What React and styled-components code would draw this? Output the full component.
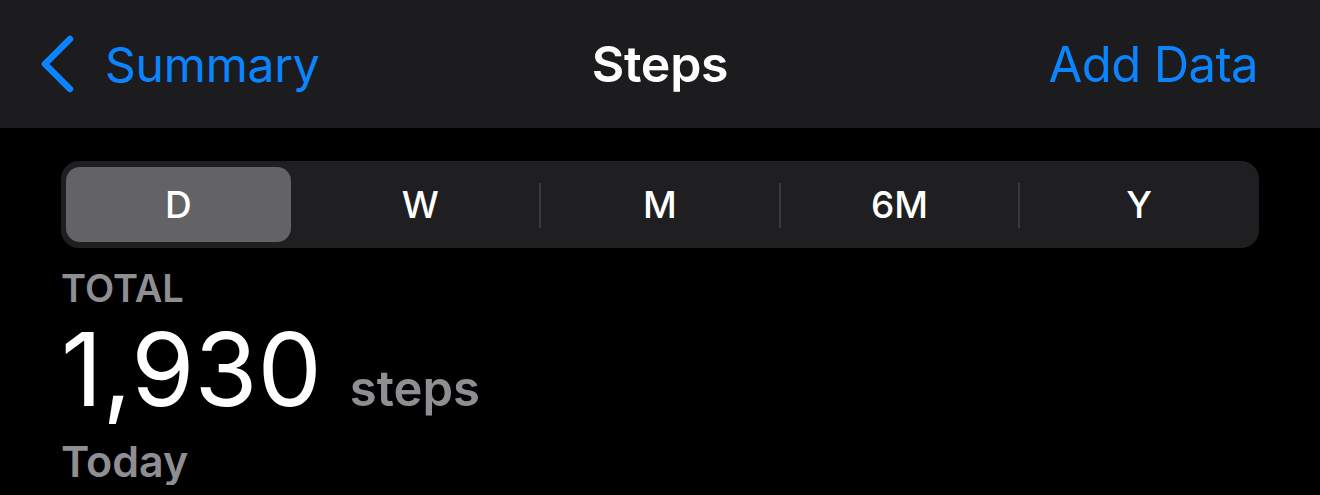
import styled, { createGlobalStyle } from "styled-components";

const GlobalStyle = createGlobalStyle`
  html, body {
    margin: 0;
    background: #000;
    font-family: Inter, "Noto Sans", sans-serif;
    -webkit-font-smoothing: antialiased;
  }
`;

const NavBar = styled.header`
  height: 128px;
  background: #1c1c1e;
  display: grid;
  grid-template-columns: 1fr auto 1fr;
  align-items: center;
  padding: 0 62px;
`;

const BackLink = styled.a`
  display: flex;
  align-items: center;
  gap: 29px;
  margin-left: -22px;
  color: #0a84ff;
  font-size: 48px;
  font-weight: 400;
  letter-spacing: -0.2px;
  justify-self: start;
`;

const Title = styled.h1`
  margin: 0;
  color: #fff;
  font-size: 50px;
  font-weight: 600;
  letter-spacing: -0.3px;
`;

const Action = styled.a`
  justify-self: end;
  color: #0a84ff;
  font-size: 49px;
  font-weight: 400;
  letter-spacing: -0.6px;
`;

const Content = styled.main`
  padding: 33px 61px 0 61px;
`;

const Segmented = styled.div`
  height: 87px;
  background: #1f1f22;
  border-radius: 18px;
  display: grid;
  grid-template-columns: repeat(5, 1fr);
`;

const Segment = styled.div`
  position: relative;
  display: flex;
  align-items: center;
  justify-content: center;
  padding-right: ${(p) => (p.$active ? "5px" : "0")};
  color: #fff;
  font-size: 37px;
  font-weight: 500;

  &::before {
    content: "";
    display: ${(p) => (p.$divider ? "block" : "none")};
    position: absolute;
    left: -1px;
    top: 22px;
    bottom: 20px;
    width: 2px;
    background: #3a3a3c;
  }
`;

const Pill = styled.div`
  position: absolute;
  inset: 6px 10px 6px 5px;
  border-radius: 14px;
  background: #636366;
`;

const SegmentText = styled.span`
  position: relative;
`;

const Label = styled.div`
  margin-top: 19px;
  color: #8e8e93;
  font-size: 38px;
  font-weight: 600;
  line-height: 42px;
`;

const ValueRow = styled.div`
  display: flex;
  align-items: baseline;
  gap: 28px;
  padding-top: 12px;
  line-height: 97px;
`;

const Value = styled.span`
  color: #fff;
  font-size: 102px;
  font-weight: 400;
`;

const Unit = styled.span`
  color: #8e8e93;
  font-size: 49px;
  font-weight: 600;
`;

const Period = styled.div`
  color: #8e8e93;
  font-size: 43px;
  font-weight: 600;
  line-height: 48px;
`;

const segments = ["D", "W", "M", "6M", "Y"];

function Chevron() {
  return (
    <svg width="36" height="58" viewBox="0 0 36 58" fill="none">
      <path
        d="M30 4 L5 29 L30 54"
        stroke="#0a84ff"
        strokeWidth="6.5"
        strokeLinecap="round"
        strokeLinejoin="round"
      />
    </svg>
  );
}

export default function App() {
  return (
    <>
      <GlobalStyle />
      <NavBar>
        <BackLink>
          <Chevron />
          Summary
        </BackLink>
        <Title>Steps</Title>
        <Action>Add Data</Action>
      </NavBar>
      <Content>
        <Segmented>
          {segments.map((s, i) => (
            <Segment key={s} $active={i === 0} $divider={i > 1}>
              {i === 0 && <Pill />}
              <SegmentText>{s}</SegmentText>
            </Segment>
          ))}
        </Segmented>
        <Label>TOTAL</Label>
        <ValueRow>
          <Value>1,930</Value>
          <Unit>steps</Unit>
        </ValueRow>
        <Period>Today</Period>
      </Content>
    </>
  );
}
